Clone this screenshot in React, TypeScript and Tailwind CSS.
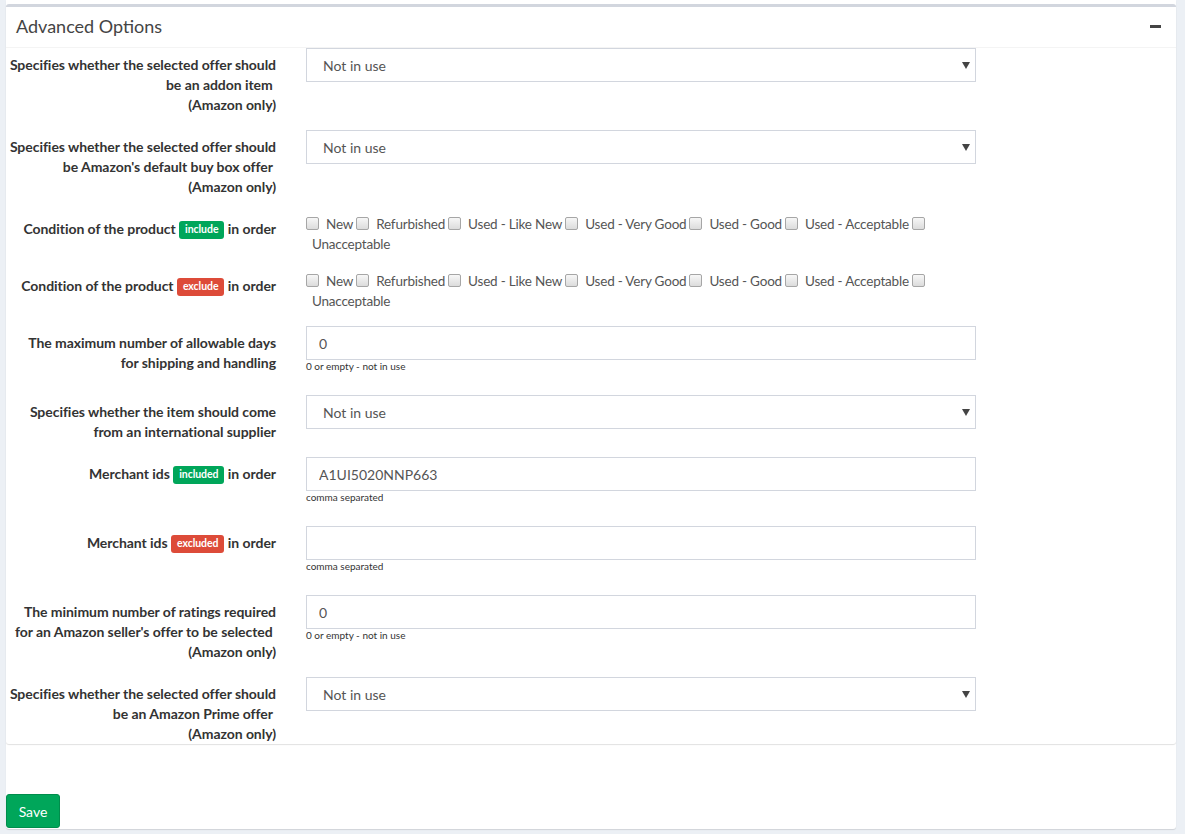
import React from 'react'

const font = { fontFamily: 'Lato, "Open Sans", sans-serif' }

function Badge({ color, children }: { color: 'green' | 'red'; children: React.ReactNode }) {
  return (
    <span
      className={`inline-block rounded-[3px] px-[6px] pt-[3px] pb-[4px] text-[10.5px] font-bold leading-none text-white align-[1px] ${
        color === 'green' ? 'bg-[#00a65a]' : 'bg-[#dd4b39]'
      }`}
    >
      {children}
    </span>
  )
}

function Row({ label, children, last }: { label: React.ReactNode; children: React.ReactNode; last?: boolean }) {
  return (
    <div className={`flex ${last ? '' : 'mb-[15px]'}`}>
      <div className="w-[285px] shrink-0 pr-[15px] pt-[7px] text-right text-[14px] font-bold leading-[20px] tracking-[-0.05px] text-[#333] whitespace-nowrap">
        {label}
      </div>
      <div className="ml-[15px] w-[670px] shrink-0">{children}</div>
    </div>
  )
}

function Select() {
  return (
    <div className="relative">
      <select className="h-[34px] w-full appearance-none border border-[#d2d6de] bg-white pl-[16px] text-[14px] text-[#555] outline-none">
        <option>Not in use</option>
      </select>
      <svg className="pointer-events-none absolute right-[6px] top-[14px]" width="8" height="7" viewBox="0 0 8 7">
        <path d="M0 0H8L4 7Z" fill="#444" />
      </svg>
    </div>
  )
}

function TextInput({ value, help }: { value: string; help: string }) {
  return (
    <div>
      <input
        readOnly
        value={value}
        className="h-[34px] w-full border border-[#d2d6de] bg-white px-[12px] text-[14px] text-[#555] outline-none"
      />
      <div className="mb-[7px] text-[10px] leading-[13px] text-[#333]">{help}</div>
    </div>
  )
}

const conditions = ['New', 'Refurbished', 'Used - Like New', 'Used - Very Good', 'Used - Good', 'Used - Acceptable']

function Box() {
  return (
    <input
      type="checkbox"
      className="m-0 inline-block h-[13px] w-[13px] appearance-none rounded-[2px] border border-[#a6a6a6] bg-gradient-to-b from-[#f7f7f7] to-[#dcdcdc] align-[-1px]"
    />
  )
}

function Conditions() {
  return (
    <div className="pt-[2px] text-[13.5px] leading-[20px] tracking-[-0.2px] text-[#555]">
      {conditions.map((c) => (
        <React.Fragment key={c}>
          <Box />
          <span className="pl-[7px] pr-[3px]">{c}</span>
        </React.Fragment>
      ))}
      <Box />
      <span className="inline-block pl-[6px]">Unacceptable</span>
    </div>
  )
}

export default function App() {
  return (
    <div className="min-h-screen bg-[#ecf0f5] pl-[6px] pr-[9px]" style={font}>
      <div className="rounded-b-[3px] bg-white pt-[4px] pb-[1px] shadow-[0_1px_1px_rgba(0,0,0,0.12)]">
        {/* Advanced Options box */}
        <div className="rounded-[3px] border-t-[3px] border-[#d2d6de] bg-white shadow-[0_1px_1px_rgba(0,0,0,0.12)]">
          <div className="flex h-[41px] items-center justify-between border-b border-[#f4f4f4] px-[10px] pb-[2px]">
            <h3 className="text-[18px] leading-[20px] text-[#444]">Advanced Options</h3>
            <span className="mr-[5px] block h-[3px] w-[11px] bg-[#444]" />
          </div>

          <div>
            <Row
              label={
                <>
                  Specifies whether the selected offer should
                  <br />
                  be an addon item&nbsp;
                  <br />
                  (Amazon only)
                </>
              }
            >
              <Select />
            </Row>

            <Row
              label={
                <>
                  Specifies whether the selected offer should
                  <br />
                  be Amazon's default buy box offer&nbsp;
                  <br />
                  (Amazon only)
                </>
              }
            >
              <Select />
            </Row>

            <Row
              label={
                <>
                  Condition of the product <Badge color="green">include</Badge> in order
                </>
              }
            >
              <Conditions />
            </Row>

            <Row
              label={
                <>
                  Condition of the product <Badge color="red">exclude</Badge> in order
                </>
              }
            >
              <Conditions />
            </Row>

            <Row
              label={
                <>
                  The maximum number of allowable days
                  <br />
                  for shipping and handling
                </>
              }
            >
              <TextInput value="0" help="0 or empty - not in use" />
            </Row>

            <Row
              label={
                <>
                  Specifies whether the item should come
                  <br />
                  from an international supplier
                </>
              }
            >
              <Select />
            </Row>

            <Row
              label={
                <>
                  Merchant ids <Badge color="green">included</Badge> in order
                </>
              }
            >
              <TextInput value="A1UI5020NNP663" help="comma separated" />
            </Row>

            <Row
              label={
                <>
                  Merchant ids <Badge color="red">excluded</Badge> in order
                </>
              }
            >
              <TextInput value="" help="comma separated" />
            </Row>

            <Row
              label={
                <>
                  The minimum number of ratings required
                  <br />
                  for an Amazon seller's offer to be selected&nbsp;
                  <br />
                  (Amazon only)
                </>
              }
            >
              <TextInput value="0" help="0 or empty - not in use" />
            </Row>

            <Row
              last
              label={
                <>
                  Specifies whether the selected offer should
                  <br />
                  be an Amazon Prime offer&nbsp;
                  <br />
                  (Amazon only)
                </>
              }
            >
              <Select />
            </Row>
          </div>
        </div>

        <div className="pt-[50px]">
          <button className="h-[34px] w-[54px] rounded-[3px] border border-[#008d4c] bg-[#00a65a] text-[14px] text-white">
            Save
          </button>
        </div>
      </div>
    </div>
  )
}
